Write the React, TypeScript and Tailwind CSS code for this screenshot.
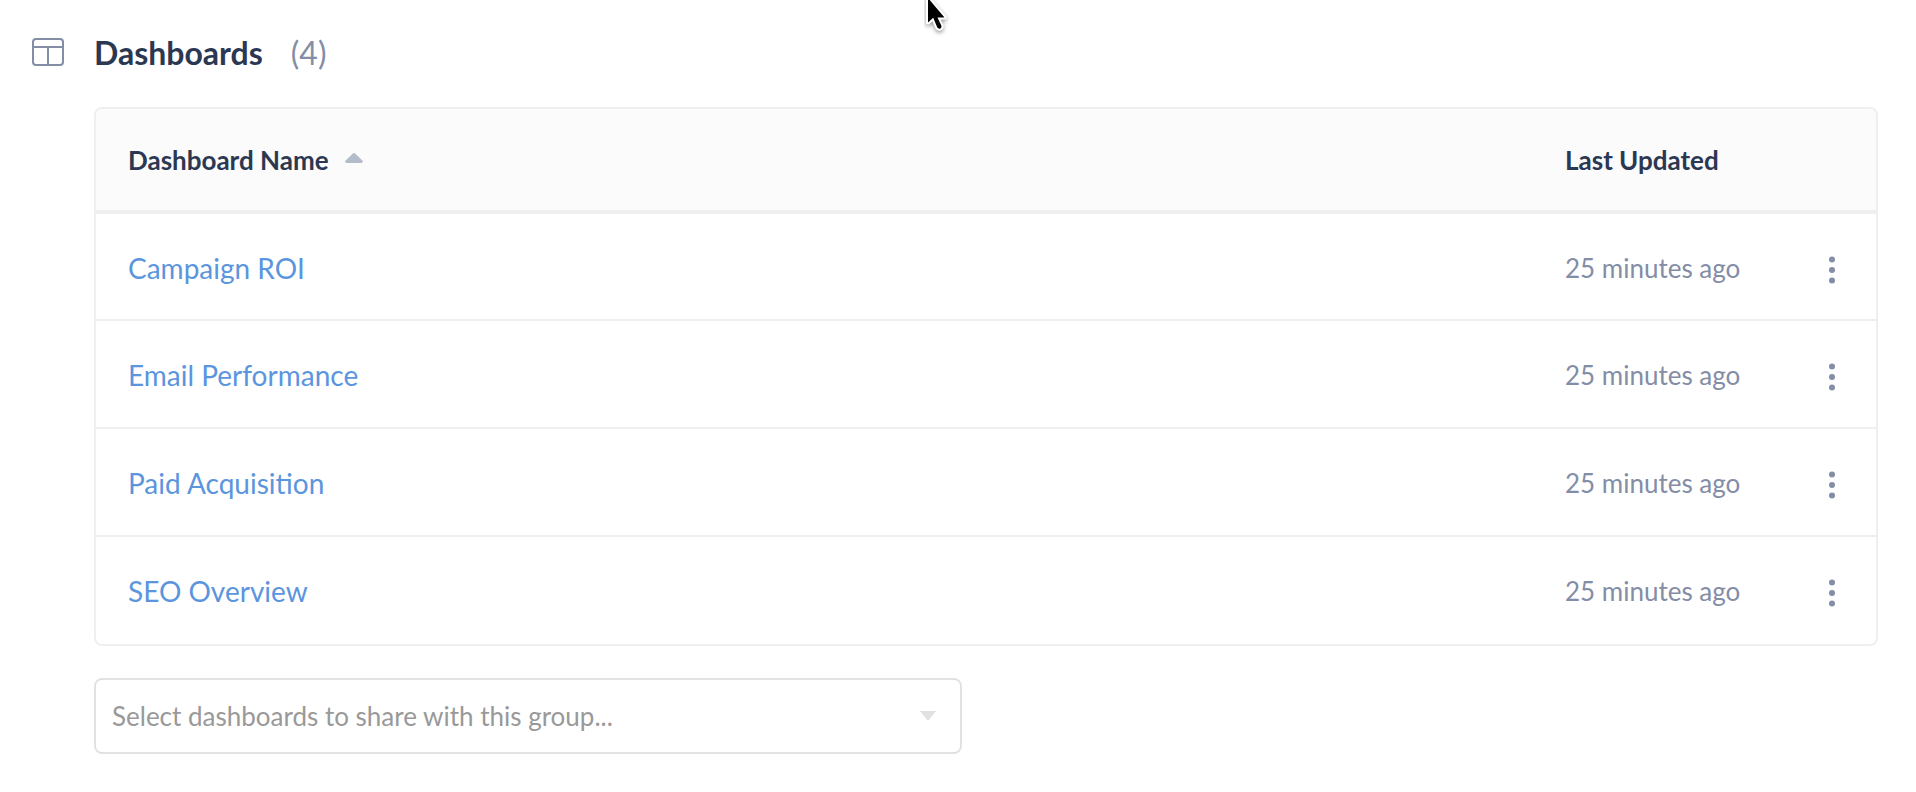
import { useState } from "react";

const dashboards = [
  { name: "Campaign ROI", updated: "25 minutes ago" },
  { name: "Email Performance", updated: "25 minutes ago" },
  { name: "Paid Acquisition", updated: "25 minutes ago" },
  { name: "SEO Overview", updated: "25 minutes ago" },
];

function LayoutIcon() {
  return (
    <svg className="block h-7 w-8 shrink-0" viewBox="0 0 32 28" fill="none" stroke="#838da6" strokeWidth="2" aria-hidden="true">
      <rect x="1" y="1" width="30" height="26" rx="3" />
      <path d="M1 9H31M16 9V27" />
    </svg>
  );
}

function SortUpIcon() {
  return (
    <svg className="mb-1 block h-[10px] w-[18px]" viewBox="0 0 18 10" fill="#b4bccb" aria-hidden="true">
      <path d="M7.9 .5Q9 -.5 10.1 .5L17.4 7.4Q18.4 8.6 17.4 9.6Q17 10 16.2 10H1.8Q1 10 .6 9.6Q-.4 8.6 .6 7.4Z" />
    </svg>
  );
}

function DotsIcon() {
  return (
    <svg className="block h-7 w-[6px]" viewBox="0 0 6 28" fill="#838da6" aria-hidden="true">
      <circle cx="3" cy="3.5" r="3" />
      <circle cx="3" cy="14" r="3" />
      <circle cx="3" cy="24.5" r="3" />
    </svg>
  );
}

function Pointer() {
  return (
    <svg className="pointer-events-none absolute top-0 left-1/2 ml-[-34px] h-10 w-7" viewBox="0 0 28 40" aria-hidden="true">
      <g transform="translate(4 0)">
        <path
          d="M0 -2V22.5L5.2 17.8L9.3 27.6Q10.6 29.2 12.4 28.4Q14 27.5 13.4 25.8L9.5 17.6H16.5Z"
          fill="#000"
          stroke="#fff"
          strokeWidth="4"
          strokeLinejoin="round"
          paintOrder="stroke"
          className="drop-shadow-[0_2px_2px_rgba(0,0,0,0.4)]"
        />
      </g>
    </svg>
  );
}

export default function App() {
  const [selected, setSelected] = useState("");
  return (
    <main className="relative min-h-screen bg-white pt-8 pr-[38px] pb-8 pl-8 font-['Lato',sans-serif] text-[#838da6]">
      <Pointer />
      <section>
        <header className="flex items-start">
          <span className="pt-[6px]">
            <LayoutIcon />
          </span>
          <h1 className="ml-[30px] text-[32px] leading-[42px] font-bold text-[#2c3852]">Dashboards</h1>
          <span className="ml-7 text-[32px] leading-[42px]">(4)</span>
        </header>

        <div className="mt-[33px] ml-[62px]">
          <div className="overflow-hidden rounded-lg border-2 border-[#efefef]">
            <table className="w-full table-fixed border-collapse text-left">
              <colgroup>
                <col />
                <col className="w-[223px]" />
                <col className="w-[88px]" />
              </colgroup>
              <thead>
                <tr className="h-[105px] bg-[#fbfbfb] text-[26px] leading-8 text-[#2c3852] shadow-[inset_0_-4px_0_#efefef]">
                  <th scope="col" className="pb-1 pl-8 font-bold" aria-sort="ascending">
                    <button type="button" className="flex items-center gap-4 font-bold">
                      Dashboard Name
                      <SortUpIcon />
                    </button>
                  </th>
                  <th scope="col" className="pb-1 font-bold">Last Updated</th>
                  <th scope="col" aria-label="Actions" />
                </tr>
              </thead>
              <tbody>
                {dashboards.map((item) => (
                  <tr
                    key={item.name}
                    className="h-[108px] shadow-[inset_0_-2px_0_#efefef] first:h-[107px] last:h-[107px] last:shadow-none"
                  >
                    <td className="pl-8 text-[28px] leading-9">
                      <a href="#" className="text-[#5b95de]">{item.name}</a>
                    </td>
                    <td className="text-[26px] leading-9">{item.updated}</td>
                    <td className="pt-1">
                      <button type="button" aria-label={`Options for ${item.name}`} className="ml-[33px] block px-2 py-1">
                        <DotsIcon />
                      </button>
                    </td>
                  </tr>
                ))}
              </tbody>
            </table>
          </div>

          <div className="relative mt-8 max-w-[868px]">
            <select
              aria-label="Select dashboards to share with this group"
              value={selected}
              onChange={(e) => setSelected(e.target.value)}
              className="block h-[76px] w-full appearance-none rounded-lg border-2 border-[#e2e2e2] bg-white pr-14 pl-4 text-[26px] leading-8 text-[#999999]"
            >
              <option value="">Select dashboards to share with this group...</option>
              {dashboards.map((item) => (
                <option key={item.name}>{item.name}</option>
              ))}
            </select>
            <svg className="pointer-events-none absolute top-[33px] right-[26px] h-[10px] w-4" viewBox="0 0 16 10" fill="#e1e1e1" aria-hidden="true">
              <path d="M0 0H16L8 10Z" />
            </svg>
          </div>
        </div>
      </section>
    </main>
  );
}
